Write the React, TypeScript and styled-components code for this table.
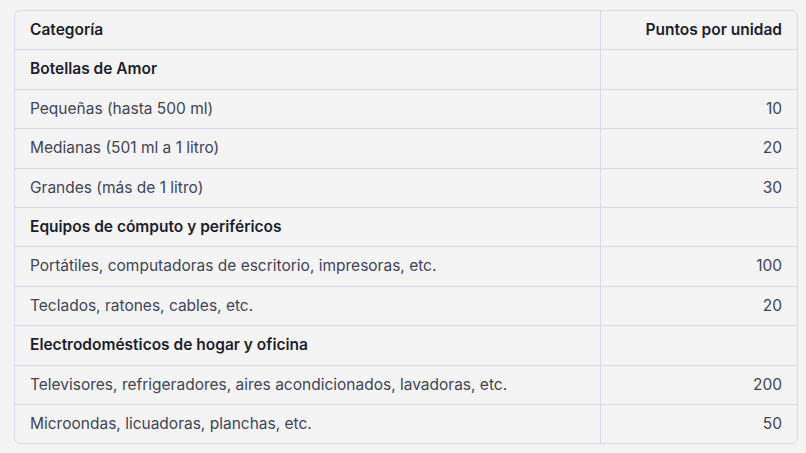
import React from "react";
import styled, { createGlobalStyle } from "styled-components";

const Global = createGlobalStyle`
  html, body { margin: 0; padding: 0; background: #f4f4f4; }
  body { font-family: Inter, "Noto Sans", sans-serif; }
`;

const Page = styled.div`
  padding: 10px 9px 10px 14px;
`;

const Frame = styled.div`
  border: 1px solid #dcdce6;
  border-radius: 6px;
  overflow: hidden;
  width: 782px;
`;

const Table = styled.table`
  width: 100%;
  border-collapse: collapse;
  font-size: 15.5px;
  line-height: 22.4px;
`;

const Cell = styled.td<{ $right?: boolean; $bold?: boolean; $head?: boolean }>`
  padding: 8px 15px 8px 15px;
  height: 22.4px;
  text-align: ${(p) => (p.$right ? "right" : "left")};
  font-weight: ${(p) => (p.$bold ? 600 : 400)};
  color: ${(p) => (p.$bold ? "#1d1e2c" : "#424455")};
  border-top: ${(p) => (p.$head ? "none" : "1px solid #dcdce6")};
  & + & { border-left: 1px solid #dcdce6; width: 166px; }
`;

type Row = { label: string; value?: string; group?: boolean };

const rows: Row[] = [
  { label: "Botellas de Amor", group: true },
  { label: "Pequeñas (hasta 500 ml)", value: "10" },
  { label: "Medianas (501 ml a 1 litro)", value: "20" },
  { label: "Grandes (más de 1 litro)", value: "30" },
  { label: "Equipos de cómputo y periféricos", group: true },
  { label: "Portátiles, computadoras de escritorio, impresoras, etc.", value: "100" },
  { label: "Teclados, ratones, cables, etc.", value: "20" },
  { label: "Electrodomésticos de hogar y oficina", group: true },
  { label: "Televisores, refrigeradores, aires acondicionados, lavadoras, etc.", value: "200" },
  { label: "Microondas, licuadoras, planchas, etc.", value: "50" },
];

export default function App() {
  return (
    <>
      <Global />
      <Page>
        <Frame>
          <Table>
            <thead>
              <tr>
                <Cell as="th" $head $bold>Categoría</Cell>
                <Cell as="th" $head $bold $right>Puntos por unidad</Cell>
              </tr>
            </thead>
            <tbody>
              {rows.map((r, i) => (
                <tr key={i}>
                  <Cell $bold={r.group}>{r.label}</Cell>
                  <Cell $right>{r.value ?? ""}</Cell>
                </tr>
              ))}
            </tbody>
          </Table>
        </Frame>
      </Page>
    </>
  );
}
